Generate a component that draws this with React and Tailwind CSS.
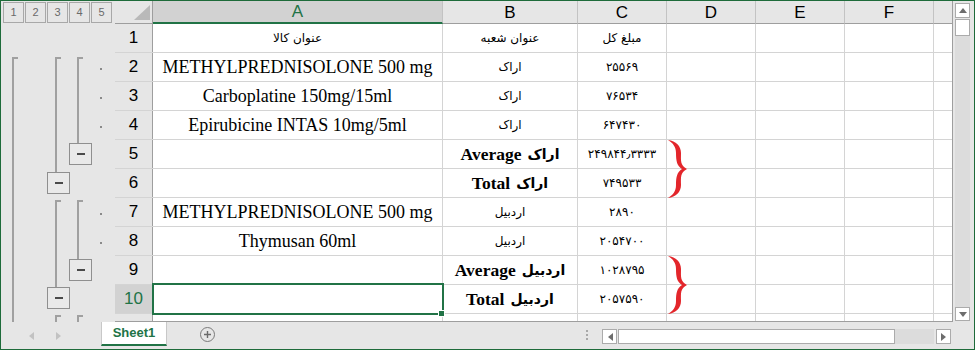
import React from 'react';

const COLS = [
  { key: 'A', w: 'w-[290px]' },
  { key: 'B', w: 'w-[135px]' },
  { key: 'C', w: 'w-[89px]' },
  { key: 'D', w: 'w-[89px]' },
  { key: 'E', w: 'w-[89px]' },
  { key: 'F', w: 'w-[89px]' },
  { key: 'G', w: 'w-[18px]', last: true },
];

const ROWS = [
  { n: 1, a: 'عنوان کالا', b: 'عنوان شعبه', c: 'مبلغ کل', title: true },
  { n: 2, a: 'METHYLPREDNISOLONE 500 mg', b: 'اراک', c: '۲۵۵۶۹' },
  { n: 3, a: 'Carboplatine 150mg/15ml', b: 'اراک', c: '۷۶۵۳۴' },
  { n: 4, a: 'Epirubicine INTAS 10mg/5ml', b: 'اراک', c: '۶۴۷۴۳۰' },
  { n: 5, b: 'اراک', label: 'Average', c: '۲۴۹۸۴۴٫۳۳۳۳' },
  { n: 6, b: 'اراک', label: 'Total', c: '۷۴۹۵۳۳' },
  { n: 7, a: 'METHYLPREDNISOLONE 500 mg', b: 'اردبیل', c: '۲۸۹۰' },
  { n: 8, a: 'Thymusan 60ml', b: 'اردبیل', c: '۲۰۵۴۷۰۰' },
  { n: 9, b: 'اردبیل', label: 'Average', c: '۱۰۲۸۷۹۵' },
  { n: 10, b: 'اردبیل', label: 'Total', c: '۲۰۵۷۵۹۰', selected: true },
];

const serif = "font-[family-name:'Liberation_Serif','DejaVu_Serif',serif]";
const persian = "font-[family-name:'DejaVu_Sans',sans-serif]";
const sans = "font-[family-name:'Liberation_Sans',Arial,sans-serif]";

// outline gutter: brackets, collapse buttons and detail dots
const Bracket = ({ x, y, h }) => (
  <>
    <div className="absolute w-[2px] bg-[#a0a0a0]" style={{ left: x, top: y, height: h }} />
    <div className="absolute h-[2px] w-[6px] bg-[#a0a0a0]" style={{ left: x, top: y }} />
  </>
);

const Minus = ({ x, y }) => (
  <div
    className="absolute w-[23px] h-[22px] border border-[#8f8f8f] bg-[#e9e9e9] flex items-center justify-center"
    style={{ left: x, top: y }}
  >
    <div className="w-[8px] h-[2px] bg-[#4a4a4a]" />
  </div>
);

const Gutter = () => (
  <div className="w-[114px] h-[321px] shrink-0 relative bg-[#e6e6e6]">
    <div className="flex gap-[1px] pl-[2px] pt-[1px]">
      {[1, 2, 3, 4, 5].map((n) => (
        <div
          key={n}
          className={`w-[21px] h-[21px] border border-[#a8a8a8] flex items-center justify-center text-[11px] text-[#6a6a6a] ${sans}`}
        >
          {n}
        </div>
      ))}
    </div>
    <Bracket x={11} y={56} h={265} />
    <Bracket x={54} y={56} h={115} />
    <Bracket x={76} y={56} h={86} />
    <Minus x={68} y={142} />
    <Minus x={46} y={171} />
    <Bracket x={54} y={199} h={87} />
    <Bracket x={76} y={199} h={59} />
    <Minus x={68} y={258} />
    <Minus x={46} y={286} />
    <Bracket x={54} y={314} h={7} />
    <Bracket x={76} y={314} h={7} />
    {[2, 3, 4, 7, 8].map((k) => (
      <div
        key={k}
        className="absolute w-[2px] h-[2px] bg-[#8a8a8a]"
        style={{ left: 99, top: 38 + (k - 1) * 29 }}
      />
    ))}
  </div>
);

const Brace = ({ top }) => (
  <svg className="absolute" style={{ left: 552, top }} width="22" height="58" viewBox="0 0 22 58">
    <path
      d="M1 0 C9 1 14 6 14 13 C14 21 13 25 20 29 C13 33 14 37 14 45 C14 52 9 57 1 58 C6 55 9 51 9 45 C9 37 10 32 15 29 C10 26 9 21 9 13 C9 7 6 3 1 0 Z"
      fill="#e3262b"
    />
  </svg>
);

const Cell = ({ col, row }) => {
  let content = null;
  if (col.key === 'A' && row.a) {
    content = row.title ? (
      <span className={`${persian} text-[12px]`}>{row.a}</span>
    ) : (
      <span className={`${serif} text-[18px]`}>{row.a}</span>
    );
  }
  if (col.key === 'B' && row.b) {
    content = row.label ? (
      <span className="flex items-center gap-[6px] font-bold">
        <span className={`${serif} text-[17.5px]`}>{row.label}</span>
        <span className={`${persian} text-[14px]`}>{row.b}</span>
      </span>
    ) : (
      <span className={`${persian} text-[12px]`}>{row.b}</span>
    );
  }
  if (col.key === 'C' && row.c) {
    content = <span className={`${persian} text-[12px]`}>{row.c}</span>;
  }
  return (
    <div
      className={`${col.w} h-full shrink-0 flex items-center justify-center text-black bg-white ${
        col.last ? '' : 'border-r border-[#d4d4d4]'
      }`}
    >
      {content}
    </div>
  );
};

const Grid = () => (
  <div className={`w-[838px] h-[321px] shrink-0 border-r border-b border-[#9e9e9e] flex flex-col ${sans}`}>
    {/* column header */}
    <div className="flex h-[23px] shrink-0">
      <div className="w-[38px] h-full border-r border-b border-[#9e9e9e] bg-[#e6e6e6] relative">
        <svg className="absolute right-[2px] bottom-[3px]" width="16" height="15" viewBox="0 0 16 15">
          <path d="M16 0 L16 15 L0 15 Z" fill="#b9b9b9" />
        </svg>
      </div>
      {COLS.map((col) => (
        <div
          key={col.key}
          className={`${col.w} h-full shrink-0 flex items-center justify-center text-[17px] leading-none ${
            col.key === 'A'
              ? 'bg-[#d2d2d2] text-[#217346] border-b-2 border-b-[#217346]'
              : 'bg-[#e6e6e6] text-black border-b border-b-[#9e9e9e]'
          } ${col.last ? '' : 'border-r border-r-[#c3c3c3]'}`}
        >
          {col.last ? '' : col.key}
        </div>
      ))}
    </div>
    {/* body */}
    <div className="relative h-[297px] overflow-hidden">
      {ROWS.map((row) => (
        <div key={row.n} className="flex h-[29px] border-b border-[#d4d4d4]">
          <div
            className={`w-[38px] h-full shrink-0 border-r border-[#9e9e9e] flex items-center justify-center text-[17px] ${
              row.selected ? 'bg-[#d2d2d2] text-[#217346]' : 'bg-[#e6e6e6] text-black'
            }`}
          >
            {row.n}
          </div>
          {COLS.map((col) => (
            <Cell key={col.key} col={col} row={row} />
          ))}
        </div>
      ))}
      {/* row 11, only its top edge is in view */}
      <div className="flex h-[7px]">
        <div className="w-[38px] h-full shrink-0 border-r border-[#9e9e9e] bg-[#e6e6e6]" />
        {COLS.map((col) => (
          <div
            key={col.key}
            className={`${col.w} h-full shrink-0 bg-white ${col.last ? '' : 'border-r border-[#d4d4d4]'}`}
          />
        ))}
      </div>
      <Brace top={116} />
      <Brace top={232} />
      {/* active cell A10 */}
      <div className="absolute left-[37px] top-[259px] w-[292px] h-[32px] border-2 border-[#217346]" />
      <div className="absolute left-[323px] top-[286px] w-[7px] h-[7px] bg-[#217346] border border-white" />
    </div>
  </div>
);

const Tri = ({ dir, color = '#6d6d6d' }) => (
  <svg width="6" height="8" viewBox="0 0 6 8">
    <path d={dir === 'left' ? 'M6 0 L6 8 L1 4 Z' : 'M0 0 L0 8 L5 4 Z'} fill={color} />
  </svg>
);

const TriV = ({ dir }) => (
  <svg width="8" height="5" viewBox="0 0 8 5">
    <path d={dir === 'up' ? 'M0 5 L8 5 L4 0 Z' : 'M0 0 L8 0 L4 5 Z'} fill="#6d6d6d" />
  </svg>
);

const VScroll = () => (
  <div className="w-[21px] h-[321px] shrink-0 bg-[#e6e6e6] pl-[2px] pr-[4px] pt-[2px] pb-[1px] flex flex-col">
    <div className="h-[15px] border border-[#ababab] bg-white flex items-center justify-center">
      <TriV dir="up" />
    </div>
    <div className="h-[17px] mt-[1px] border border-[#ababab] bg-white" />
    <div className="flex-1 bg-[#dcdcdc]" />
    <div className="h-[14px] border border-[#ababab] bg-white flex items-center justify-center">
      <TriV dir="down" />
    </div>
  </div>
);

const TabBar = () => (
  <div className={`h-[27px] flex items-start bg-[#e6e6e6] ${sans}`}>
    <div className="w-[100px] h-full flex items-center gap-[22px] pl-[27px]">
      <Tri dir="left" color="#c2c2c2" />
      <Tri dir="right" color="#c2c2c2" />
    </div>
    <div className="w-[66px] h-[24px] bg-white border-x border-[#c8c8c8] border-b-2 border-b-[#217346] flex items-center justify-center text-[13px] font-bold text-[#217346]">
      Sheet1
    </div>
    <div className="ml-[33px] mt-[5px] w-[15px] h-[15px] rounded-full border border-[#7a7a7a] flex items-center justify-center">
      <svg width="9" height="9" viewBox="0 0 9 9">
        <path d="M4.5 1 V8 M1 4.5 H8" stroke="#6a6a6a" strokeWidth="1.4" />
      </svg>
    </div>
    <div className="flex-1" />
    <div className="mt-[8px] flex flex-col gap-[2px]">
      <div className="w-[2px] h-[2px] bg-[#a8a8a8]" />
      <div className="w-[2px] h-[2px] bg-[#a8a8a8]" />
      <div className="w-[2px] h-[2px] bg-[#a8a8a8]" />
    </div>
    <div className="ml-[14px] mt-[7px] w-[349px] h-[15px] flex">
      <div className="w-[15px] h-full border border-[#ababab] bg-white flex items-center justify-center">
        <Tri dir="left" />
      </div>
      <div className="ml-[1px] w-[277px] h-full border border-[#ababab] bg-white" />
      <div className="flex-1 h-full bg-[#dcdcdc]" />
      <div className="ml-[2px] w-[15px] h-full border border-[#ababab] bg-white flex items-center justify-center">
        <Tri dir="right" />
      </div>
    </div>
    <div className="w-[23px]" />
  </div>
);

export default function App() {
  return (
    <div className="w-[975px] h-[350px] border border-[#1e6b3a] bg-[#e6e6e6] overflow-hidden flex flex-col">
      <div className="flex h-[321px] shrink-0">
        <Gutter />
        <Grid />
        <VScroll />
      </div>
      <TabBar />
    </div>
  );
}
